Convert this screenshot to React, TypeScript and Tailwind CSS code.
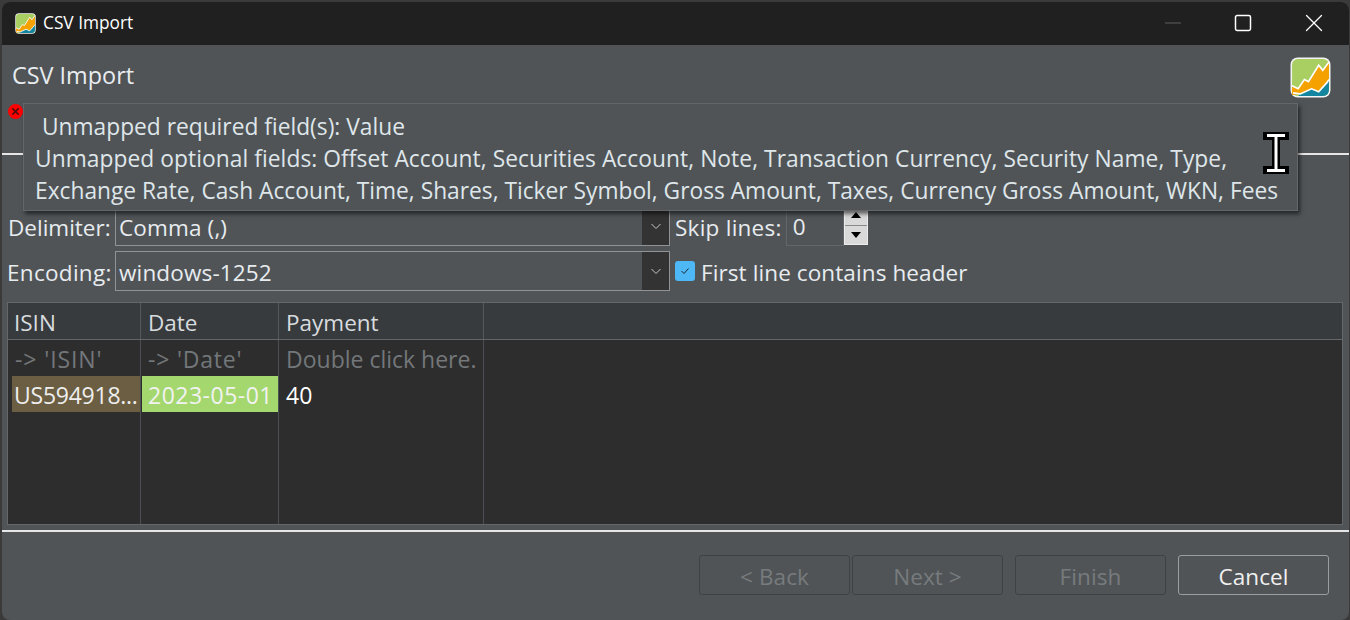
import { Minus, Square, X } from 'lucide-react';

const font = "font-['Open_Sans','Noto_Sans',sans-serif]";

// App logo: green tile with orange and teal area chart
function Logo({ className }: { className: string }) {
  return (
    <svg viewBox="0 0 40 40" className={className}>
      <rect x="0.5" y="0.5" width="39" height="39" rx="7" fill="#f4f4f4" />
      <rect x="2" y="2" width="36" height="36" rx="5.5" fill="#a9cf62" />
      <path d="M2 37 V28 L8 31 L14 22 L18 24 L28 8 L32 13 L38 5 V32 L36 25 L28 34 L21 31 L10 36 Z" fill="#f5a100" />
      <path d="M8 38 L10 36 L21 31 L28 34 L36 25 L38 22 V32 Q38 38 32 38 Z" fill="#14859f" />
      <path d="M2 28 L8 31 L14 22 L18 24 L28 8 L32 13 L38 5" fill="none" stroke="#fff" strokeWidth="1.6" />
      <path d="M3 35 L10 36 L21 31 L28 34 L36 25 L38 22" fill="none" stroke="#fff" strokeWidth="1.6" />
    </svg>
  );
}

function Chevron() {
  return (
    <svg viewBox="0 0 12 12" className="w-3 h-3">
      <path d="M1.5 4 L6 8.5 L10.5 4" fill="none" stroke="#c8c8c8" strokeWidth="1" />
    </svg>
  );
}

function Combo({ value, className }: { value: string; className: string }) {
  return (
    <div className={`flex w-[555px] border border-[#8f9396] bg-[#505457] ${className}`}>
      <div className="flex-1 flex items-center pl-[3px] pt-[4px] tracking-[0.15px] text-[#e8ecef]">{value}</div>
      <div className="w-[27px] bg-[#333333] flex items-center justify-center">
        <Chevron />
      </div>
    </div>
  );
}

function WizardButton({ label, disabled, className = '' }: { label: string; disabled?: boolean; className?: string }) {
  return (
    <div
      className={`w-[151px] h-[40px] rounded-[3px] border flex items-center justify-center pt-[4px] tracking-[0.1px] ${
        disabled ? 'border-[#3f4244] text-[#777b7d]' : 'border-[#9a9ea0] text-[#f0f0f0]'
      } ${className}`}
    >
      {label}
    </div>
  );
}

export default function App() {
  return (
    <div className={`${font} relative w-[1350px] h-[620px] overflow-hidden bg-[#3a3a3a] text-[22.5px] leading-none`}>
      <div className="w-full h-full pt-[2px] pl-[2px] pr-[1px]">
        <div className="w-full h-full rounded-[8px] overflow-hidden bg-[#505457] flex flex-col">
          {/* title bar */}
          <div className="h-[43px] shrink-0 bg-[#202020] flex items-center text-white">
            <Logo className="ml-[13px] w-[21px] h-[21px] -mt-[1px]" />
            <span className="ml-[7px] text-[17.3px] -mt-[2px]">CSV Import</span>
            <div className="ml-auto flex items-center -mt-[1px]">
              <div className="w-[70px] flex justify-center">
                <Minus className="w-[26px] h-[26px] text-[#5e5e5e]" strokeWidth={1} />
              </div>
              <div className="w-[70px] flex justify-center">
                <Square className="w-[20px] h-[20px] text-white" strokeWidth={1.8} />
              </div>
              <div className="w-[71px] flex justify-center">
                <X className="w-[30px] h-[30px] text-white" strokeWidth={1} />
              </div>
            </div>
          </div>

          {/* wizard header */}
          <div className="h-[110px] shrink-0 border-b-2 border-[#e6e6e6] flex justify-between pl-[10px] pr-[18px] pt-[19px]">
            <span className="text-[#e8ecef] text-[23.4px]">CSV Import</span>
            <Logo className="w-[41px] h-[41px] -mt-[7px]" />
          </div>

          {/* form, top part sits under the tooltip */}
          <div className="h-[92px] shrink-0 flex flex-col justify-end text-[#e8ecef]">
            <div className="h-[42px] flex items-start ml-[6px]">
              <span className="w-[107px] pt-[12px]">Delimiter:</span>
              <Combo value="Comma (,)" className="h-[41px] pt-[1px]" />
              <span className="ml-[5px] pt-[12px] tracking-[0.25px]">Skip lines:</span>
              <div className="ml-[4px] w-[58px] h-[41px] border border-[#62666a] pl-[6px] pt-[10px]">0</div>
              <div className="w-[24px] h-[40px] bg-[#d9d9d9] flex flex-col gap-[1px] border border-[#ececec]">
                <div className="flex-1 w-full flex items-center justify-center text-black">
                  <svg viewBox="0 0 10 6" className="w-[10px] h-[6px]"><path d="M5 0 L10 6 H0 Z" fill="#000" /></svg>
                </div>
                <div className="flex-1 w-full flex items-center justify-center text-black border-t border-[#8a8a8a]">
                  <svg viewBox="0 0 10 6" className="w-[10px] h-[6px]"><path d="M0 0 H10 L5 6 Z" fill="#000" /></svg>
                </div>
              </div>
            </div>
          </div>
          <div className="h-[50px] shrink-0 flex items-start ml-[5px] text-[#e8ecef] pt-[4px]">
            <span className="w-[108px] pt-[11px] tracking-[0.3px]">Encoding:</span>
            <Combo value="windows-1252" className="h-[40px]" />
            <div className="ml-[5px] w-[20px] h-[20px] mt-[10px] rounded-[3px] bg-[#4db8f5] flex items-center justify-center">
              <svg viewBox="0 0 12 12" className="w-[12px] h-[12px]">
                <path d="M2.5 6 L5 8.5 L9.5 3.5" fill="none" stroke="#1a2a35" strokeWidth="1" />
              </svg>
            </div>
            <span className="ml-[6px] pt-[11px] tracking-[0.1px]">First line contains header</span>
          </div>

          {/* csv preview table */}
          <div className="ml-[5px] mr-[6px] mt-[5px] h-[223px] shrink-0 border border-[#63676a] bg-[#2d2d2d] flex flex-col">
            <div className="h-[37px] bg-[#373b3e] border-b border-[#63676a] flex items-center text-[#d8dcdf]">
              <div className="w-[133px] h-full border-r border-[#55595c] flex items-center pl-[6px] pt-[5px]">ISIN</div>
              <div className="w-[138px] h-full border-r border-[#55595c] flex items-center pl-[7px] pt-[5px]">Date</div>
              <div className="w-[205px] h-full border-r border-[#55595c] flex items-center pl-[7px] pt-[5px]">Payment</div>
            </div>
            <div className="flex-1 grid grid-cols-[133px_138px_205px_1fr] text-[23px]">
              <div className="border-r border-[#4c5054] flex flex-col pt-[1px]">
                <div className="h-[35px] flex items-center pl-[7px] pt-[2px] tracking-[0.9px] text-[#73777a]">-&gt; 'ISIN'</div>
                <div className="h-[36px] ml-[4px] bg-[#6b5e42] text-[#eeeeee] flex items-center pl-[2px] pt-[2px] tracking-[-0.25px] whitespace-nowrap overflow-hidden">US594918...</div>
              </div>
              <div className="border-r border-[#4c5054] flex flex-col pt-[1px]">
                <div className="h-[35px] flex items-center pl-[7px] pt-[2px] tracking-[0.8px] text-[#73777a]">-&gt; 'Date'</div>
                <div className="h-[36px] ml-[1px] bg-[#a4d86f] text-[#f2f2f2] flex items-center pl-[6px] pt-[2px] tracking-[0.5px]">2023-05-01</div>
              </div>
              <div className="border-r border-[#4c5054] flex flex-col pt-[1px]">
                <div className="h-[35px] flex items-center pl-[7px] pt-[2px] text-[#73777a] whitespace-nowrap">Double click here.</div>
                <div className="h-[36px] flex items-center pl-[7px] pt-[2px] text-white">40</div>
              </div>
            </div>
          </div>

          <div className="mt-[5px] h-[2px] shrink-0 bg-[#e6e6e6]" />

          {/* wizard buttons */}
          <div className="flex-1 flex items-start pt-[23px] pl-[697px]">
            <WizardButton label="< Back" disabled />
            <WizardButton label="Next >" disabled className="ml-[2px]" />
            <WizardButton label="Finish" disabled className="ml-[12px]" />
            <WizardButton label="Cancel" className="ml-[12px]" />
          </div>
        </div>
      </div>

      {/* error marker peeking out from under the tooltip */}
      <div className="absolute left-[8px] top-[104px] w-[15px] h-[15px] rounded-full bg-[#ff0000] flex items-center justify-center">
        <X className="w-[11px] h-[11px] text-[#4a0a0a]" strokeWidth={3.5} />
      </div>

      {/* tooltip */}
      <div className="absolute left-[23px] top-[103px] w-[1275px] h-[108px] bg-[#505457] border border-[#63676a] shadow-[2px_3px_4px_rgba(0,0,0,0.55)] text-[#dfe6ea] text-[22.75px] pl-[11px] pt-[12px] whitespace-nowrap">
        <div className="h-[32px] pl-[7px]">Unmapped required field(s): Value</div>
        <div className="h-[32px] tracking-[0.065px]">Unmapped optional fields: Offset Account, Securities Account, Note, Transaction Currency, Security Name, Type,</div>
        <div className="h-[32px]">Exchange Rate, Cash Account, Time, Shares, Ticker Symbol, Gross Amount, Taxes, Currency Gross Amount, WKN, Fees</div>
      </div>

      {/* text cursor */}
      <svg viewBox="0 0 26 42" className="absolute left-[1263px] top-[132px] w-[26px] h-[42px]">
        <path d="M0 0 H26 V8 H17 V34 H26 V42 H0 V34 H9 V8 H0 Z" fill="#000" />
        <path d="M4 3.5 H22 M13 3.5 V38.5 M4 38.5 H22" fill="none" stroke="#fff" strokeWidth="3" />
      </svg>
    </div>
  );
}
